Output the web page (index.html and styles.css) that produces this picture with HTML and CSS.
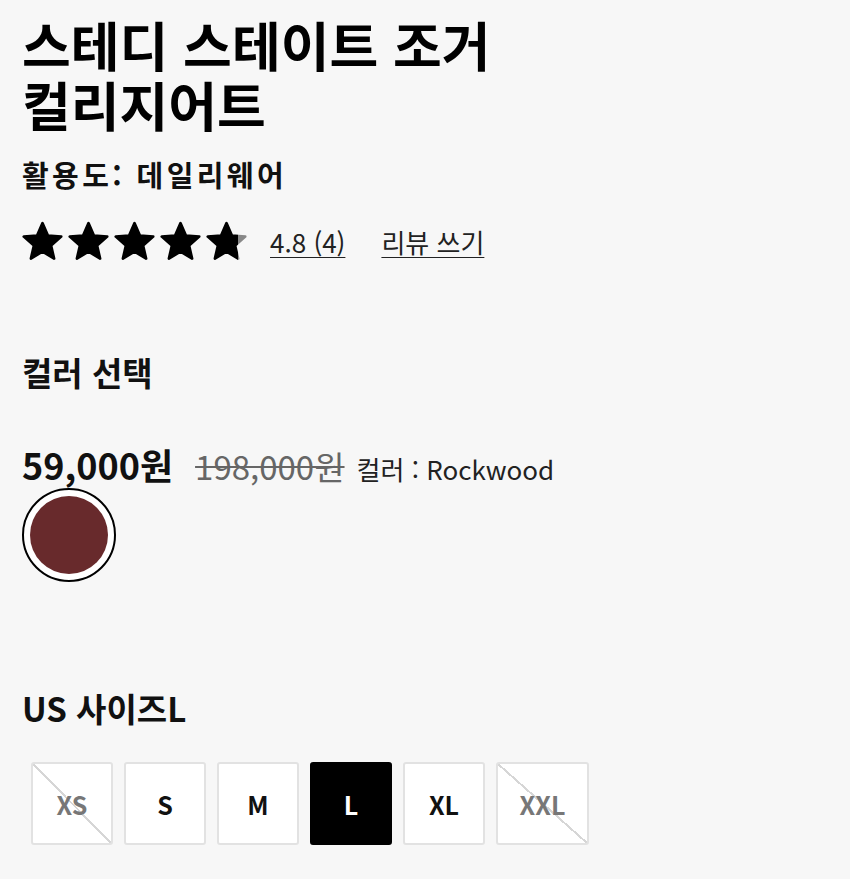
FILE: index.html
```html
<!DOCTYPE html>
<html lang="ko">
<head>
<meta charset="utf-8">
<link rel="stylesheet" href="styles.css">
</head>
<body>
<div class="page">
  <h1 class="title"><span class="line">스테디 스테이트 조거</span><span class="line">컬리지어트</span></h1>
  <div class="usage">활용도: 데일리웨어</div>
  <div class="rating">
    <div class="stars">
      <svg viewBox="0 0 24 24" class="star"><path d="M12 2.2l2.9 6.6 7.1.6-5.4 4.7 1.6 7-6.2-3.7-6.2 3.7 1.6-7L2 9.4l7.1-.6z"/></svg>
      <svg viewBox="0 0 24 24" class="star"><path d="M12 2.2l2.9 6.6 7.1.6-5.4 4.7 1.6 7-6.2-3.7-6.2 3.7 1.6-7L2 9.4l7.1-.6z"/></svg>
      <svg viewBox="0 0 24 24" class="star"><path d="M12 2.2l2.9 6.6 7.1.6-5.4 4.7 1.6 7-6.2-3.7-6.2 3.7 1.6-7L2 9.4l7.1-.6z"/></svg>
      <svg viewBox="0 0 24 24" class="star"><path d="M12 2.2l2.9 6.6 7.1.6-5.4 4.7 1.6 7-6.2-3.7-6.2 3.7 1.6-7L2 9.4l7.1-.6z"/></svg>
      <svg viewBox="0 0 24 24" class="star"><defs><linearGradient id="part"><stop offset="80%" stop-color="#000"/><stop offset="80%" stop-color="#888"/></linearGradient></defs><path fill="url(#part)" stroke="url(#part)" d="M12 2.2l2.9 6.6 7.1.6-5.4 4.7 1.6 7-6.2-3.7-6.2 3.7 1.6-7L2 9.4l7.1-.6z"/></svg>
    </div>
    <a class="link score">4.8 (4)</a>
    <a class="link review">리뷰 쓰기</a>
  </div>

  <h2 class="section color-head">컬러 선택</h2>
  <div class="price-row">
    <span class="price">59,000원</span>
    <span class="old-price">198,000원</span>
    <span class="color-name">컬러 : Rockwood</span>
  </div>
  <div class="swatch-wrap"><span class="swatch"></span></div>

  <h2 class="section size-head">US 사이즈L</h2>
  <div class="sizes">
    <button class="size na">XS</button>
    <button class="size">S</button>
    <button class="size">M</button>
    <button class="size active">L</button>
    <button class="size">XL</button>
    <button class="size na wide">XXL</button>
  </div>
</div>
</body>
</html>
```

FILE: styles.css
```css
html, body {
  margin: 0;
  padding: 0;
  background: #f7f7f7;
}
body {
  font-family: "Noto Sans CJK KR", "Noto Sans", sans-serif;
  color: #111;
}
.page {
  padding: 14px 22px 0 22px;
}
.title {
  margin: 0;
  font-size: 53px;
  line-height: 60px;
  font-weight: 700;
  color: #000;
}
.title .line {
  display: block;
  height: 60px;
  overflow: visible;
}
.usage {
  margin-top: 20px;
  font-size: 29px;
  line-height: 40px;
  font-weight: 700;
  letter-spacing: 3.4px;
}
.rating {
  display: flex;
  align-items: center;
  margin-top: 24px;
  height: 46px;
}
.stars {
  display: flex;
  gap: 1px;
  margin-left: -2px;
}
.star {
  width: 45px;
  height: 45px;
  display: block;
}
.star path {
  fill: #000;
  stroke: #000;
  stroke-width: 1.4;
  stroke-linejoin: round;
}
.stars .star:last-child path {
  fill: url(#part);
  stroke: url(#part);
}
.link {
  font-size: 26px;
  color: #222;
  text-decoration: underline;
  text-underline-offset: 4px;
  text-decoration-thickness: 1px;
}
.score {
  margin-left: 21px;
}
.review {
  margin-left: 36px;
}
.section {
  margin: 0;
  font-size: 33px;
  line-height: 44px;
  font-weight: 700;
  color: #111;
}
.color-head {
  margin-top: 86px;
}
.price-row {
  margin-top: 44px;
  display: flex;
  align-items: baseline;
  height: 42px;
}
.price {
  font-size: 36px;
  font-weight: 700;
  color: #111;
}
.old-price {
  margin-left: 22px;
  font-size: 33px;
  color: #666;
  text-decoration: line-through;
  text-decoration-thickness: 2px;
}
.color-name {
  margin-left: 12px;
  font-size: 26px;
  color: #222;
}
.swatch-wrap {
  margin-top: 8px;
  width: 90px;
  height: 90px;
  border: 2px solid #000;
  border-radius: 50%;
  display: flex;
  align-items: center;
  justify-content: center;
  background: #fff;
}
.swatch {
  width: 78px;
  height: 78px;
  border-radius: 50%;
  background: #682a2c;
  display: block;
}
.size-head {
  margin-top: 104px;
}
.sizes {
  margin-top: 32px;
  margin-left: 9px;
  display: flex;
  gap: 11px;
}
.size {
  position: relative;
  width: 82px;
  height: 83px;
  box-sizing: border-box;
  border: 2px solid #e2e2e2;
  border-radius: 3px;
  background: #fff;
  font-family: "Noto Sans CJK KR", "Noto Sans", sans-serif;
  font-size: 25px;
  font-weight: 700;
  color: #111;
  padding: 0;
  overflow: hidden;
}
.size.wide {
  width: 93px;
}
.size.active {
  background: #000;
  border-color: #000;
  color: #fff;
}
.size.na {
  color: #777;
  background: #fff linear-gradient(to top right, transparent calc(50% - 1px), #d6d6d6 calc(50% - 1px), #d6d6d6 calc(50% + 1px), transparent calc(50% + 1px));
}
```
